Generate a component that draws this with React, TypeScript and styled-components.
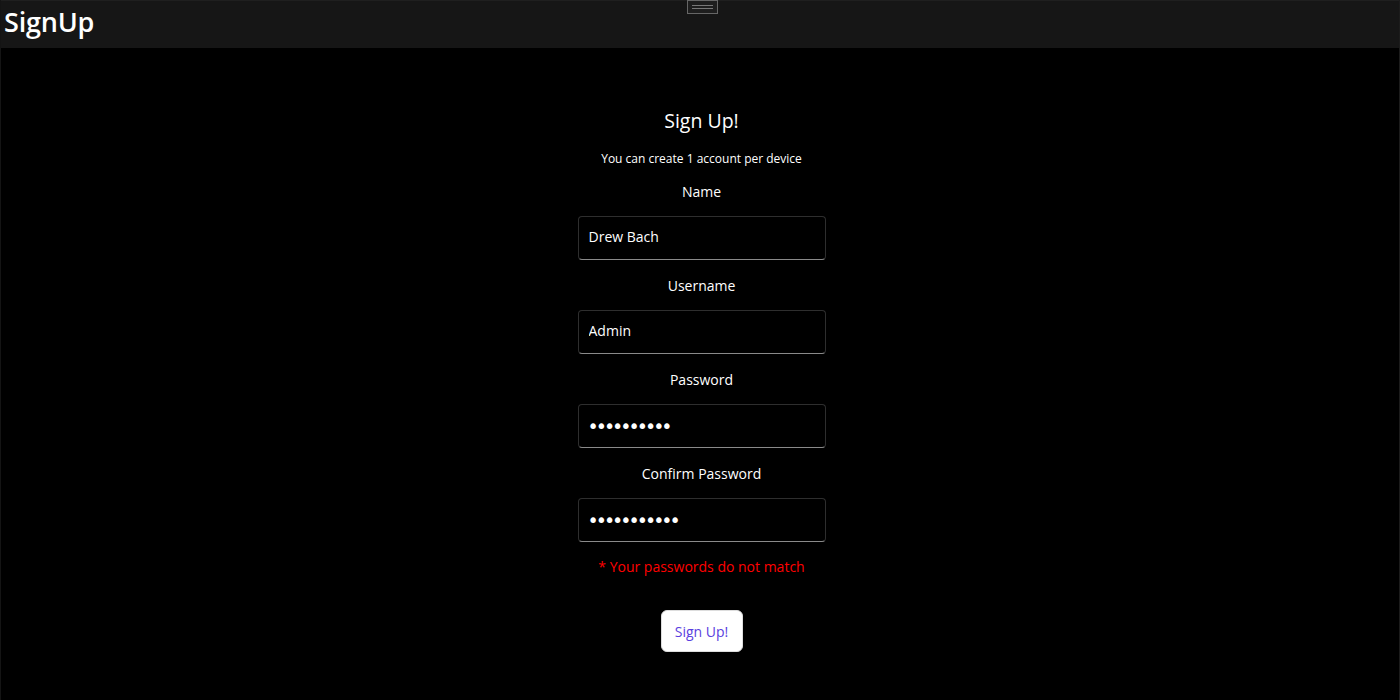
import React from "react";
import styled, { createGlobalStyle } from "styled-components";

const Global = createGlobalStyle`
  html, body { margin: 0; padding: 0; background: #000; }
  body { font-family: "Open Sans", "Noto Sans", sans-serif; color: #fff; }
  * { box-sizing: border-box; }
`;

const Frame = styled.div`
  width: 1400px;
  height: 700px;
  display: flex;
  flex-direction: column;
  background: #000;
  border-left: 1px solid #141414;
  border-right: 1px solid #1c1c1c;
  overflow: hidden;
`;

const Header = styled.header`
  position: relative;
  height: 48px;
  flex: none;
  background: #161616;
  border-top: 1px solid #1f1f1f;
  display: flex;
  align-items: flex-start;
  padding-left: 3px;
`;

const Brand = styled.h1`
  margin: 0;
  font-size: 27px;
  font-weight: 600;
  line-height: 41px;
  letter-spacing: -0.2px;
  color: #fff;
`;

const Handle = styled.div`
  position: absolute;
  top: -1px;
  left: 686px;
  width: 31px;
  height: 14px;
  border: 1px solid #666;
  background: #1e1e1e;
  display: flex;
  flex-direction: column;
  justify-content: center;
  align-items: center;
  gap: 2px;
`;

const HandleLine = styled.span`
  display: block;
  width: 21px;
  height: 1px;
  background: #777;
`;

const Main = styled.main`
  flex: 1;
  display: flex;
  flex-direction: column;
  align-items: center;
  padding-top: 58px;
  padding-left: 3px;
`;

const Title = styled.h2`
  margin: 0;
  font-size: 19.5px;
  font-weight: 400;
  line-height: 30px;
`;

const Subtitle = styled.p`
  margin: 15px 0 0;
  font-size: 12px;
  line-height: 16px;
`;

const Field = styled.div<{ $first?: boolean }>`
  display: flex;
  flex-direction: column;
  align-items: center;
  margin-top: ${(p) => (p.$first ? "15px" : "16px")};
`;

const Label = styled.label`
  font-size: 14px;
  line-height: 20px;
`;

const Input = styled.input`
  margin-top: 14px;
  width: 248px;
  height: 44px;
  background: #000;
  border: 1px solid #2e2e2e;
  border-bottom: 1px solid #8a8a8a;
  border-radius: 4px;
  padding: 0 10px 4px;
  color: #fff;
  font-family: "Open Sans", "Noto Sans", sans-serif;
  font-size: 14px;
  outline: none;
  &[type="password"] {
    font-family: "DejaVu Sans", sans-serif;
    font-size: 19px;
    letter-spacing: -3px;
    padding: 0 10px 1px 9px;
  }
`;

const ErrorText = styled.p`
  margin: 15px 0 0;
  color: #ff0000;
  font-size: 14px;
  line-height: 20px;
`;

const Button = styled.button`
  margin-top: 33px;
  width: 82px;
  height: 42px;
  background: #fff;
  border: 1px solid #ddd;
  border-radius: 6px;
  color: #5a3ee0;
  font-family: "Open Sans", "Noto Sans", sans-serif;
  font-size: 14px;
  cursor: pointer;
`;

const fields = [
  { label: "Name", type: "text", value: "Drew Bach" },
  { label: "Username", type: "text", value: "Admin" },
  { label: "Password", type: "password", value: "passwordxx" },
  { label: "Confirm Password", type: "password", value: "passwordxxx" },
];

export default function App() {
  return (
    <>
      <Global />
      <Frame>
        <Header>
          <Brand>SignUp</Brand>
          <Handle>
            <HandleLine />
            <HandleLine />
          </Handle>
        </Header>
        <Main>
          <Title>Sign Up!</Title>
          <Subtitle>You can create 1 account per device</Subtitle>
          {fields.map((f, i) => (
            <Field key={f.label} $first={i === 0}>
              <Label>{f.label}</Label>
              <Input type={f.type} defaultValue={f.value} readOnly />
            </Field>
          ))}
          <ErrorText>* Your passwords do not match</ErrorText>
          <Button>Sign Up!</Button>
        </Main>
      </Frame>
    </>
  );
}
